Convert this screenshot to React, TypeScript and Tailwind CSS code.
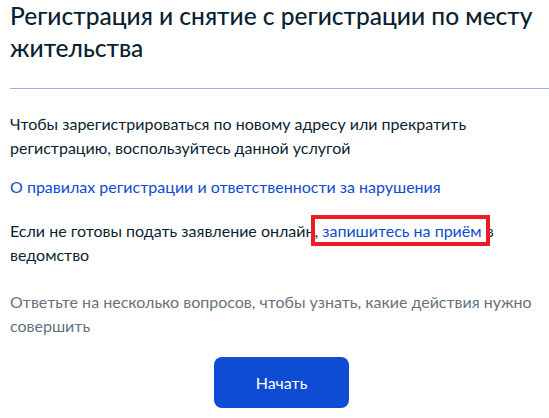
import React from 'react'

export default function App() {
  return (
    <div className="w-[549px] h-[418px] overflow-hidden bg-white" style={{ fontFamily: 'Lato, "Noto Sans", sans-serif' }}>
      <div className="w-[553px] pl-[10px]">
        {/* Заголовок */}
        <h1 className="text-[24.5px] leading-[32px] text-[#0b1f33] font-medium">
          Регистрация и снятие с регистрации по месту жительства
        </h1>
        <div className="mt-[24px] h-px bg-[#97adf0]" />

        <div className="mt-[23px] text-[16px] leading-[24px] text-[#0b1f33]">
          <p>Чтобы зарегистрироваться по новому адресу или прекратить регистрацию, воспользуйтесь данной услугой</p>

          <p className="mt-[15px]">
            <a href="#" className="text-[#0d4cd3]">О правилах регистрации и ответственности за нарушения</a>
          </p>

          <p className="mt-[20px]">
            Если не готовы подать заявление онлайн,{' '}
            <span className="relative">
              <a href="#" className="text-[#0d4cd3]">запишитесь на приём</a>
              <span className="absolute -left-[11px] -right-[8px] -top-[6px] -bottom-[6px] border-4 border-[#ec1c24]" />
            </span>{' '}
            в ведомство
          </p>

          <p className="mt-[23px] text-[#66727f]">
            Ответьте на несколько вопросов, чтобы узнать, какие действия нужно совершить
          </p>
        </div>

        <div className="mt-[19px] flex justify-center">
          <button className="w-[135px] h-[51px] rounded-[8px] bg-[#0d4cd3] text-white text-[16px]">
            Начать
          </button>
        </div>
      </div>
    </div>
  )
}
